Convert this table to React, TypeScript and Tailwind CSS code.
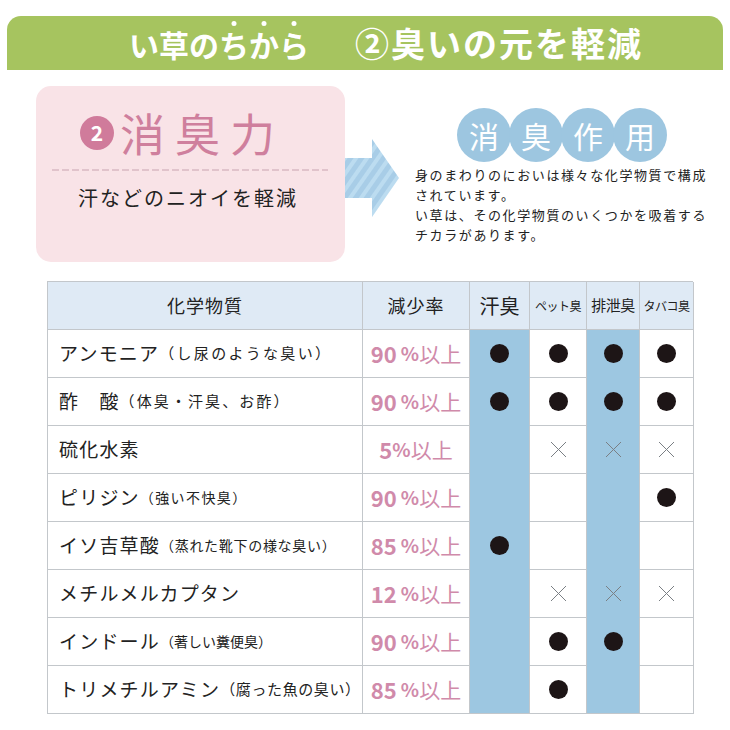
type Mark = "dot" | "x" | "";

const ROWS: { name: string; note: string; noteCls: string; rate: string; marks: Mark[] }[] = [
  { name: "アンモニア", note: "（し尿のような臭い）", noteCls: "text-[15px] tracking-[2.3px]", rate: "90", marks: ["dot", "dot", "dot", "dot"] },
  { name: "酢　酸", note: "（体臭・汗臭、お酢）", noteCls: "text-[15px] tracking-[2.1px]", rate: "90", marks: ["dot", "dot", "dot", "dot"] },
  { name: "硫化水素", note: "", noteCls: "", rate: "5", marks: ["", "x", "x", "x"] },
  { name: "ピリジン", note: "（強い不快臭）", noteCls: "text-[14px] tracking-[1.4px]", rate: "90", marks: ["", "", "", "dot"] },
  { name: "イソ吉草酸", note: "（蒸れた靴下の様な臭い）", noteCls: "text-[14px] tracking-[0.7px]", rate: "85", marks: ["dot", "", "", ""] },
  { name: "メチルメルカプタン", note: "", noteCls: "", rate: "12", marks: ["", "x", "x", "x"] },
  { name: "インドール", note: "（著しい糞便臭）", noteCls: "text-[14px]", rate: "90", marks: ["", "dot", "dot", ""] },
  { name: "トリメチルアミン", note: "（腐った魚の臭い）", noteCls: "text-[15px] tracking-[0.6px]", rate: "85", marks: ["", "dot", "", ""] },
];

const BLUE = [true, false, true, false];

function Cross() {
  return (
    <svg width="17" height="17" viewBox="0 0 17 17">
      <path d="M1 1 L16 16 M16 1 L1 16" stroke="#7a7f84" strokeWidth="1" fill="none" />
    </svg>
  );
}

function Arrow() {
  return (
    <svg width="55" height="79" viewBox="0 0 55 79" className="mt-[53px] shrink-0">
      <defs>
        <pattern id="stripes" width="9" height="9" patternUnits="userSpaceOnUse" patternTransform="rotate(35)">
          <rect width="9" height="9" fill="#a8cde7" />
          <rect width="4" height="9" fill="#bcdcf0" />
        </pattern>
      </defs>
      <path d="M0 19 H27 V0 L54 39 L27 78 V59 H0 Z" fill="url(#stripes)" />
    </svg>
  );
}

function Dotted({ ch }: { ch: string }) {
  return (
    <span className="relative">
      {ch}
      <span className="absolute left-1/2 -translate-x-1/2 -top-[1px] w-[5px] h-[5px] rounded-full bg-white" />
    </span>
  );
}

export default function App() {
  return (
    <div className="w-[730px] h-[730px] bg-white overflow-hidden font-['Noto_Sans_CJK_JP',sans-serif] text-[#222]">
      {/* Title banner */}
      <div className="mx-[7px] mt-[16px] h-[54px] rounded-t-[14px] bg-[#a6c45f] flex items-center pl-[122px] text-white font-bold">
        <div className="whitespace-nowrap leading-none">
          <span className="text-[30px]">
            い草の
            <Dotted ch="ち" />
            <Dotted ch="か" />
            <Dotted ch="ら" />
          </span>
          <span className="text-[34px] tracking-[2px] ml-[46px]">②臭いの元を軽減</span>
        </div>
      </div>

      <div className="flex mt-[16px] pl-[36px]">
        {/* Pink card */}
        <div className="w-[309px] h-[176px] rounded-[15px] bg-[#f9e3e7] shrink-0 flex flex-col">
          <div className="flex items-center pl-[44px] mt-[24px]">
            <div className="w-[34px] h-[34px] shrink-0 rounded-full bg-[#d07b9b] text-white text-[21px] font-bold flex items-center justify-center leading-none">
              2
            </div>
            <div className="ml-[6px] text-[45px] tracking-[10px] text-[#cf7f9d] leading-none whitespace-nowrap">消臭力</div>
          </div>
          <svg width="309" height="2" className="mt-[14px]">
            <line x1="16" y1="1" x2="292" y2="1" stroke="#c9a3b0" strokeWidth="1" strokeDasharray="7 3" />
          </svg>
          <div className="pl-[42px] mt-[17px] text-[20px] tracking-[2px] leading-none">汗などのニオイを軽減</div>
        </div>

        <Arrow />

        {/* Right info */}
        <div className="ml-[15px] flex flex-col">
          <div className="flex ml-[42px] mt-[22px]">
            {["消", "臭", "作", "用"].map((c, i) => (
              <div
                key={c}
                className={`w-[54px] h-[54px] rounded-full bg-[#9dc6e0] text-white text-[30px] leading-none flex items-center justify-center ${i > 0 ? "-ml-[2px]" : ""}`}
              >
                {c}
              </div>
            ))}
          </div>
          <p className="mt-[3px] text-[13px] leading-[20px] tracking-[1.6px] whitespace-nowrap">
            身のまわりのにおいは様々な化学物質で構成
            <br />
            されています。
            <br />
            い草は、その化学物質のいくつかを吸着する
            <br />
            チカラがあります。
          </p>
        </div>
      </div>

      {/* Table */}
      <div className="ml-[47px] mt-[19px] w-[646px] grid grid-cols-[315px_107px_60px_57px_53px_54px] border-l border-t border-[#c3c7cb]">
        <div className="h-[48px] bg-[#dfeaf5] border-r border-b border-[#c3c7cb] flex items-center justify-center text-[18px] tracking-[1px]">化学物質</div>
        <div className="h-[48px] bg-[#dfeaf5] border-r border-b border-[#c3c7cb] flex items-center justify-center text-[18px] tracking-[1px]">減少率</div>
        <div className="h-[48px] bg-[#dfeaf5] border-r border-b border-[#c3c7cb] flex items-center justify-center text-[20px]">汗臭</div>
        <div className="h-[48px] bg-[#dfeaf5] border-r border-b border-[#c3c7cb] flex items-center justify-center text-[12px] tracking-[-0.5px] whitespace-nowrap">ペット臭</div>
        <div className="h-[48px] bg-[#dfeaf5] border-r border-b border-[#c3c7cb] flex items-center justify-center text-[15px] tracking-[-0.5px] whitespace-nowrap">排泄臭</div>
        <div className="h-[48px] bg-[#dfeaf5] border-r border-b border-[#c3c7cb] flex items-center justify-center text-[12px] tracking-[-0.5px] whitespace-nowrap">タバコ臭</div>

        {ROWS.map((r, ri) => {
          const last = ri === ROWS.length - 1;
          return [
            <div key={`n${ri}`} className="h-[48px] border-r border-b border-[#c3c7cb] flex items-center pl-[11px] whitespace-nowrap">
              <span className="text-[19px] tracking-[1.2px]">{r.name}</span>
              {r.note && <span className={r.noteCls}>{r.note}</span>}
            </div>,
            <div key={`r${ri}`} className="h-[48px] border-r border-b border-[#c3c7cb] flex items-center justify-center text-[#d08aaa] whitespace-nowrap">
              <span className="text-[22px] font-bold">{r.rate}</span>
              <span className={`text-[19px] font-bold ${r.rate.length > 1 ? "ml-[4px]" : ""}`}>%</span>
              <span className="text-[21px]">以上</span>
            </div>,
            ...r.marks.map((m, mi) => (
              <div
                key={`m${ri}-${mi}`}
                className={`h-[48px] border-r border-[#c3c7cb] flex items-center justify-center ${
                  BLUE[mi] ? "bg-[#9dc7e1]" : ""
                } border-b ${BLUE[mi] && !last ? "border-b-[#9dc7e1]" : "border-b-[#c3c7cb]"}`}
              >
                {m === "dot" && <div className="w-[19px] h-[19px] rounded-full bg-[#1d1516]" />}
                {m === "x" && <Cross />}
              </div>
            )),
          ];
        })}
      </div>
    </div>
  );
}
